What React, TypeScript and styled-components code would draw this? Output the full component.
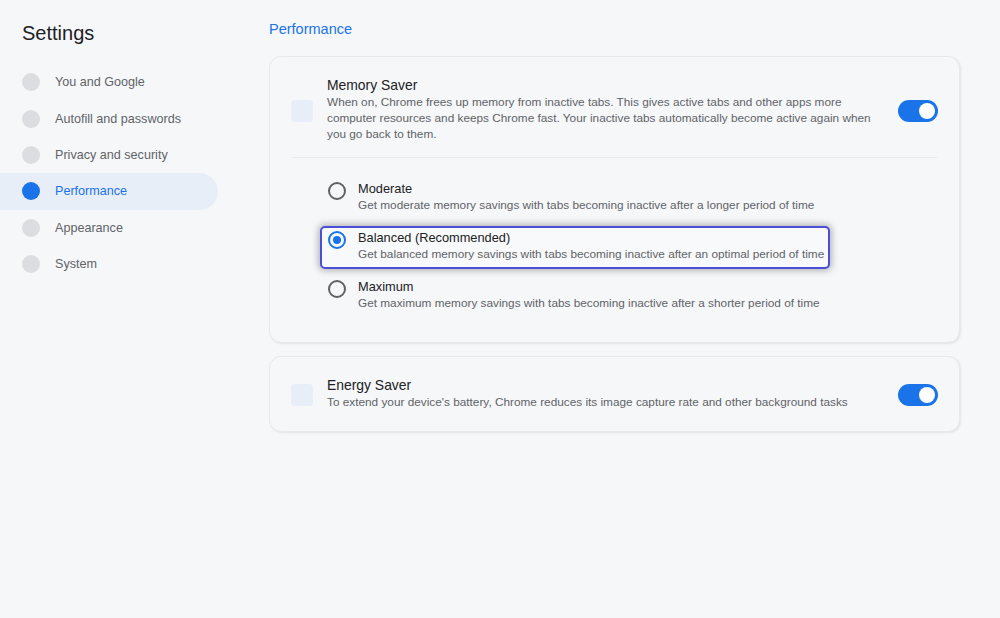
import React, { useState } from "react";
import styled, { createGlobalStyle } from "styled-components";

const navItems = [
  "You and Google",
  "Autofill and passwords",
  "Privacy and security",
  "Performance",
  "Appearance",
  "System",
];

const options = [
  {
    id: "moderate",
    title: "Moderate",
    text: "Get moderate memory savings with tabs becoming inactive after a longer period of time",
  },
  {
    id: "balanced",
    title: "Balanced (Recommended)",
    text: "Get balanced memory savings with tabs becoming inactive after an optimal period of time",
  },
  {
    id: "maximum",
    title: "Maximum",
    text: "Get maximum memory savings with tabs becoming inactive after a shorter period of time",
  },
];

const App = (): JSX.Element => {
  const [level, setLevel] = useState("balanced");
  const [memory, setMemory] = useState(true);
  const [energy, setEnergy] = useState(true);

  return (
    <>
      <GlobalStyle />
      <Page>
        <Sidebar>
          <SideTitle>Settings</SideTitle>
          <Nav>
            {navItems.map(item => (
              <NavRow key={item} $active={item === "Performance"}>
                <NavDot $active={item === "Performance"} />
                {item}
              </NavRow>
            ))}
          </Nav>
        </Sidebar>

        <Main>
          <Heading>Performance</Heading>

          <Card>
            <SettingRow>
              <IconBox />
              <SettingText>
                <SettingTitle>Memory Saver</SettingTitle>
                <SettingDesc>
                  When on, Chrome frees up memory from inactive tabs. This gives active tabs and other apps more
                  computer resources and keeps Chrome fast. Your inactive tabs automatically become active again when
                  you go back to them.
                </SettingDesc>
              </SettingText>
              <Toggle $on={memory} onClick={() => setMemory(!memory)} />
            </SettingRow>
            <Divider />
            <Options>
              {options.map(opt => (
                <Option key={opt.id} $focused={opt.id === "balanced"} onClick={() => setLevel(opt.id)}>
                  <Radio $checked={level === opt.id} />
                  <div>
                    <OptionTitle>{opt.title}</OptionTitle>
                    <OptionDesc>{opt.text}</OptionDesc>
                  </div>
                </Option>
              ))}
            </Options>
          </Card>

          <Card>
            <SettingRow $single>
              <IconBox />
              <SettingText>
                <SettingTitle>Energy Saver</SettingTitle>
                <SettingDesc>
                  To extend your device's battery, Chrome reduces its image capture rate and other background tasks
                </SettingDesc>
              </SettingText>
              <Toggle $on={energy} onClick={() => setEnergy(!energy)} />
            </SettingRow>
          </Card>
        </Main>
      </Page>
    </>
  );
};

const GlobalStyle = createGlobalStyle`
  html, body {
    margin: 0;
    padding: 0;
    background: #f6f7f9;
    font-family: "Liberation Sans", Arial, sans-serif;
  }
`;

const Page = styled.div`
  display: flex;
  min-height: 618px;
  background: #f6f7f9;
`;

const Sidebar = styled.aside`
  width: 269px;
  flex-shrink: 0;
  padding-top: 20px;
`;

const SideTitle = styled.h1`
  margin: 0 0 18px 22px;
  font-size: 20px;
  font-weight: 400;
  line-height: 26px;
  color: #202124;
`;

const Nav = styled.nav`
  display: flex;
  flex-direction: column;
`;

const NavRow = styled.div<{ $active?: boolean }>`
  width: 218px;
  height: 36.4px;
  box-sizing: border-box;
  display: flex;
  align-items: center;
  gap: 15px;
  padding-left: 22px;
  font-size: 12.6px;
  color: ${p => (p.$active ? "#1a73e8" : "#5f6368")};
  background: ${p => (p.$active ? "#e8eef8" : "transparent")};
  border-radius: 0 19px 19px 0;
`;

const NavDot = styled.span<{ $active?: boolean }>`
  width: 18px;
  height: 18px;
  border-radius: 50%;
  background: ${p => (p.$active ? "#1a73e8" : "#dcdde0")};
`;

const Main = styled.main`
  width: 691px;
  padding-top: 19px;
  display: flex;
  flex-direction: column;
  gap: 13px;
`;

const Heading = styled.h2`
  margin: 0 0 4px 0;
  font-size: 14.5px;
  font-weight: 400;
  line-height: 20px;
  color: #1a73e8;
`;

const Card = styled.section`
  background: #f6f7f9;
  border: 1px solid #e6e8ec;
  border-radius: 12px;
  box-shadow: 1px 1px 2px rgba(60, 64, 67, 0.1);
`;

const SettingRow = styled.div<{ $single?: boolean }>`
  display: flex;
  align-items: center;
  padding: ${p => (p.$single ? "19px 21px 21px 21px" : "19px 21px 15px 21px")};
`;

const IconBox = styled.div`
  width: 22px;
  height: 22px;
  border-radius: 4px;
  background: #e8eef8;
  margin: 4px 14px 0 0;
  flex-shrink: 0;
`;

const SettingText = styled.div`
  flex: 1;
`;

const SettingTitle = styled.div`
  font-size: 13.9px;
  line-height: 18px;
  color: #202124;
`;

const SettingDesc = styled.div`
  font-size: 11.8px;
  line-height: 16px;
  color: #5f6368;
  padding-right: 20px;
`;

const Toggle = styled.button<{ $on?: boolean }>`
  position: relative;
  width: 40px;
  height: 22px;
  margin-top: 4px;
  border: none;
  padding: 0;
  border-radius: 11px;
  background: ${p => (p.$on ? "#1a73e8" : "#bdc1c6")};
  flex-shrink: 0;
  cursor: pointer;

  &::after {
    content: "";
    position: absolute;
    top: 3px;
    left: ${p => (p.$on ? "21px" : "3px")};
    width: 16px;
    height: 16px;
    border-radius: 50%;
    background: #fff;
  }
`;

const Divider = styled.hr`
  margin: 0 22px;
  border: none;
  border-top: 1px solid #e8eaed;
`;

const Options = styled.div`
  display: flex;
  flex-direction: column;
  align-items: flex-start;
  gap: 6px;
  padding: 19px 0 24px 50px;
`;

const Option = styled.div<{ $focused?: boolean }>`
  display: flex;
  align-items: flex-start;
  gap: 12px;
  padding: 1px 4px 5px 6px;
  border: 2px solid ${p => (p.$focused ? "#4a4fd6" : "transparent")};
  border-radius: 5px;
  background: ${p => (p.$focused ? "#f8f9fa" : "transparent")};
  box-shadow: ${p => (p.$focused ? "0 0 6px 2px rgba(60, 64, 67, 0.35)" : "none")};
  cursor: pointer;
`;

const Radio = styled.span<{ $checked?: boolean }>`
  width: 18px;
  height: 18px;
  box-sizing: border-box;
  margin-top: 2px;
  border-radius: 50%;
  border: 2px solid ${p => (p.$checked ? "#1a73e8" : "#5f6368")};
  display: flex;
  align-items: center;
  justify-content: center;
  flex-shrink: 0;

  &::after {
    content: "";
    width: 8px;
    height: 8px;
    border-radius: 50%;
    background: ${p => (p.$checked ? "#1a73e8" : "transparent")};
  }
`;

const OptionTitle = styled.div`
  font-size: 12.8px;
  line-height: 17px;
  color: #202124;
`;

const OptionDesc = styled.div`
  font-size: 11.8px;
  line-height: 16px;
  color: #5f6368;
`;

export default App;
